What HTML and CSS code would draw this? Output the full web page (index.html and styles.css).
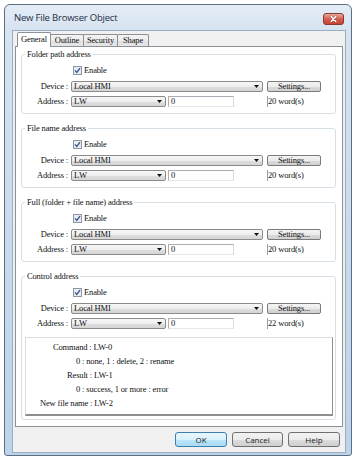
FILE: index.html
```html
<!DOCTYPE html>
<html>
<head>
<meta charset="utf-8">
<link rel="stylesheet" href="styles.css">
</head>
<body>
<div class="window">
  <div class="titlebar">
    <span class="title">New File Browser Object</span>
    <span class="close">
      <svg width="21" height="12" viewBox="0 0 21 12">
        <defs>
          <linearGradient id="cg" x1="0" y1="0" x2="0" y2="1">
            <stop offset="0" stop-color="#eab0a4"/>
            <stop offset="0.5" stop-color="#d3604f"/>
            <stop offset="1" stop-color="#c6412f"/>
          </linearGradient>
        </defs>
        <rect x="0.5" y="0.5" width="20" height="11" rx="2.5" fill="url(#cg)" stroke="#8a3a2f"/>
        <path d="M8.2 3.6 L12.8 8.4 M12.8 3.6 L8.2 8.4" stroke="#5a1d16" stroke-width="2.6" stroke-linecap="round" opacity="0.35"/>
        <path d="M8.2 3.6 L12.8 8.4 M12.8 3.6 L8.2 8.4" stroke="#fff" stroke-width="1.5" stroke-linecap="round"/>
      </svg>
    </span>
  </div>
  <div class="client">
    <div class="tabs">
      <span class="tab tab-general active">General</span>
      <span class="tab tab-outline">Outline</span>
      <span class="tab tab-security">Security</span>
      <span class="tab tab-shape">Shape</span>
    </div>
    <div class="panel">
      <fieldset class="group">
        <legend>Folder path address</legend>
        <div class="row enable"><svg class="check" width="9" height="9" viewBox="0 0 9 9"><rect x="0.5" y="0.5" width="8" height="8" fill="#e8edf3" stroke="#8b96a6"/><path d="M2 4.4 L3.8 6.5 L7 2.2" fill="none" stroke="#3f5b8c" stroke-width="1.4"/></svg><span>Enable</span></div>
        <div class="row device-row"><span class="label">Device :</span><span class="select device">Local HMI<svg class="arrow" width="5" height="3" viewBox="0 0 5 3"><path d="M0 0H5L2.5 3Z" fill="#111"/></svg></span><span class="settings">Settings...</span></div>
        <div class="row addr-row"><span class="label">Address :</span><span class="select addr">LW<svg class="arrow" width="5" height="3" viewBox="0 0 5 3"><path d="M0 0H5L2.5 3Z" fill="#111"/></svg></span><span class="input">0</span><span class="words">20 word(s)</span></div>
      </fieldset>
      <fieldset class="group">
        <legend>File name address</legend>
        <div class="row enable"><svg class="check" width="9" height="9" viewBox="0 0 9 9"><rect x="0.5" y="0.5" width="8" height="8" fill="#e8edf3" stroke="#8b96a6"/><path d="M2 4.4 L3.8 6.5 L7 2.2" fill="none" stroke="#3f5b8c" stroke-width="1.4"/></svg><span>Enable</span></div>
        <div class="row device-row"><span class="label">Device :</span><span class="select device">Local HMI<svg class="arrow" width="5" height="3" viewBox="0 0 5 3"><path d="M0 0H5L2.5 3Z" fill="#111"/></svg></span><span class="settings">Settings...</span></div>
        <div class="row addr-row"><span class="label">Address :</span><span class="select addr">LW<svg class="arrow" width="5" height="3" viewBox="0 0 5 3"><path d="M0 0H5L2.5 3Z" fill="#111"/></svg></span><span class="input">0</span><span class="words">20 word(s)</span></div>
      </fieldset>
      <fieldset class="group">
        <legend>Full (folder + file name) address</legend>
        <div class="row enable"><svg class="check" width="9" height="9" viewBox="0 0 9 9"><rect x="0.5" y="0.5" width="8" height="8" fill="#e8edf3" stroke="#8b96a6"/><path d="M2 4.4 L3.8 6.5 L7 2.2" fill="none" stroke="#3f5b8c" stroke-width="1.4"/></svg><span>Enable</span></div>
        <div class="row device-row"><span class="label">Device :</span><span class="select device">Local HMI<svg class="arrow" width="5" height="3" viewBox="0 0 5 3"><path d="M0 0H5L2.5 3Z" fill="#111"/></svg></span><span class="settings">Settings...</span></div>
        <div class="row addr-row"><span class="label">Address :</span><span class="select addr">LW<svg class="arrow" width="5" height="3" viewBox="0 0 5 3"><path d="M0 0H5L2.5 3Z" fill="#111"/></svg></span><span class="input">0</span><span class="words">20 word(s)</span></div>
      </fieldset>
      <fieldset class="group last">
        <legend>Control address</legend>
        <div class="row enable"><svg class="check" width="9" height="9" viewBox="0 0 9 9"><rect x="0.5" y="0.5" width="8" height="8" fill="#e8edf3" stroke="#8b96a6"/><path d="M2 4.4 L3.8 6.5 L7 2.2" fill="none" stroke="#3f5b8c" stroke-width="1.4"/></svg><span>Enable</span></div>
        <div class="row device-row"><span class="label">Device :</span><span class="select device">Local HMI<svg class="arrow" width="5" height="3" viewBox="0 0 5 3"><path d="M0 0H5L2.5 3Z" fill="#111"/></svg></span><span class="settings">Settings...</span></div>
        <div class="row addr-row"><span class="label">Address :</span><span class="select addr">LW<svg class="arrow" width="5" height="3" viewBox="0 0 5 3"><path d="M0 0H5L2.5 3Z" fill="#111"/></svg></span><span class="input">0</span><span class="words">22 word(s)</span></div>
        <div class="info">
          <div class="l-cmd">Command : LW-0</div>
          <div class="l-sub">0 : none, 1 : delete, 2 : rename</div>
          <div class="l-res">Result : LW-1</div>
          <div class="l-sub">0 : success, 1 or more : error</div>
          <div class="l-new">New file name : LW-2</div>
        </div>
      </fieldset>
    </div>
    <div class="buttons">
      <span class="btn ok">OK</span>
      <span class="btn cancel">Cancel</span>
      <span class="btn help">Help</span>
    </div>
  </div>
</div>
</body>
</html>
```

FILE: styles.css
```css
html, body {
  margin: 0;
  background: #ffffff;
}
body {
  font-family: "Liberation Serif", "Times New Roman", serif;
  color: #111;
}
.window {
  margin: 4px 0 0 4px;
  width: 348px;
  height: 452px;
  box-sizing: border-box;
  border: 1px solid #5b6e84;
  border-radius: 6px 6px 3px 3px;
  background: linear-gradient(to bottom, #e4edf7 0, #d6e3f0 25px, #c8daed 55%, #bdd3ea 100%);
  padding: 0 5px 2px 7px;
  display: flex;
  flex-direction: column;
}
.titlebar {
  height: 25px;
  display: flex;
  justify-content: space-between;
  align-items: center;
  flex: none;
}
.title {
  font-family: "Open Sans", "Noto Sans", sans-serif;
  font-size: 9.5px;
  letter-spacing: -0.2px;
  color: #1f2e44;
  padding-left: 2px;
}
.close {
  display: flex;
  margin-right: 2px;
  margin-top: 2px;
}
.client {
  flex: 1;
  background: #f0f0f0;
  border: 1px solid #9badc0;
  padding: 1px 2px 5px;
  display: flex;
  flex-direction: column;
}
.tabs {
  display: flex;
  align-items: flex-end;
  height: 14px;
  padding-left: 2px;
  flex: none;
}
.tab {
  height: 12px;
  box-sizing: border-box;
  border: 1px solid #8d9096;
  border-bottom: none;
  background: linear-gradient(to bottom, #f4f4f4, #ececec 50%, #e0e0e0 51%, #e6e6e6);
  font-size: 8.5px;
  letter-spacing: -0.15px;
  line-height: 11px;
  text-align: center;
  margin-left: -1px;
  border-radius: 2px 2px 0 0;
}
.tab-general { width: 34px; margin-left: 0; }
.tab-outline { width: 34px; }
.tab-security { width: 35px; }
.tab-shape { width: 32px; }
.tab.active {
  height: 15px;
  background: #ffffff;
  margin-bottom: -1px;
  padding-top: 1px;
  position: relative;
  z-index: 1;
}
.panel {
  height: 381px;
  box-sizing: border-box;
  border: 1px solid #8d9096;
  background: #ffffff;
  padding: 2px 6px 0 5px;
  flex: none;
}
.group {
  border: 1px solid #d6dfe6;
  border-radius: 3px;
  margin: 0 0 9px;
  padding: 3px 0 5px;
  min-width: 0;
}
.group.last {
  margin-bottom: 0;
  padding-bottom: 3px;
}
.group legend {
  font-size: 8.5px;
  letter-spacing: -0.15px;
  line-height: 11px;
  padding: 0 2px;
  margin-left: 3px;
}
.row {
  display: flex;
  align-items: center;
  height: 14px;
  font-size: 8.5px;
  letter-spacing: -0.15px;
}
.enable {
  padding-left: 51px;
  gap: 2px;
}
.device-row { margin-top: 2px; }
.addr-row { margin-top: 1px; }
.label {
  width: 46px;
  text-align: right;
  margin-right: 3px;
  flex: none;
}
.select {
  box-sizing: border-box;
  height: 11px;
  border: 1px solid #8b8b8b;
  border-radius: 2px;
  background: linear-gradient(to bottom, #f7f7f7, #eeeeee 50%, #dfdfdf 51%, #d5d5d5);
  display: flex;
  align-items: center;
  padding: 0 3px 0 2px;
  line-height: 9px;
  flex: none;
}
.device { width: 192px; }
.addr { width: 95px; letter-spacing: 0.4px; }
.arrow { margin-left: auto; }
.settings {
  box-sizing: border-box;
  width: 54px;
  height: 11px;
  margin-left: 4px;
  border: 1px solid #7a7a7a;
  border-radius: 2px;
  background: linear-gradient(to bottom, #f4f4f4, #ebebeb 50%, #dcdcdc 51%, #d0d0d0);
  text-align: center;
  line-height: 9px;
  flex: none;
}
.input {
  box-sizing: border-box;
  width: 66px;
  height: 11px;
  margin-left: 2px;
  border: 1px solid #a9adb5;
  border-right-color: #d6dbe2;
  border-bottom-color: #e3e8ee;
  background: #ffffff;
  padding-left: 2px;
  line-height: 9px;
  flex: none;
}
.words {
  box-sizing: border-box;
  margin-left: 33px;
  height: 11px;
  border-left: 1px solid #9d9d9d;
  line-height: 11px;
}
.info {
  margin: 7px 2px 0 3px;
  border: 1px solid #dcdcdc;
  border-right-color: #8e8e8e;
  border-bottom: 2px solid #8e8e8e;
  background: #ffffff;
  padding: 2px 0 4px;
  font-size: 8.5px;
  letter-spacing: -0.15px;
  line-height: 14px;
}
.l-cmd { padding-left: 27px; }
.l-sub { padding-left: 50px; }
.l-res { padding-left: 41px; }
.l-new { padding-left: 14px; }
.buttons {
  display: flex;
  justify-content: flex-end;
  gap: 5px;
  margin-top: 5px;
  padding-right: 3px;
  flex: none;
}
.btn {
  box-sizing: border-box;
  height: 15px;
  border: 1px solid #707070;
  border-radius: 3px;
  background: linear-gradient(to bottom, #f2f2f2, #ebebeb 50%, #dddddd 51%, #cfcfcf);
  font-family: "Open Sans", "Noto Sans", sans-serif;
  font-size: 8px;
  line-height: 13px;
  text-align: center;
  color: #1a1a1a;
}
.ok {
  width: 52px;
  border-color: #3c7fb1;
  background: linear-gradient(to bottom, #eaf6fd, #d9f0fc 50%, #bee6fd 51%, #a9dbf6);
}
.cancel { width: 51px; }
.help { width: 52px; }
```
